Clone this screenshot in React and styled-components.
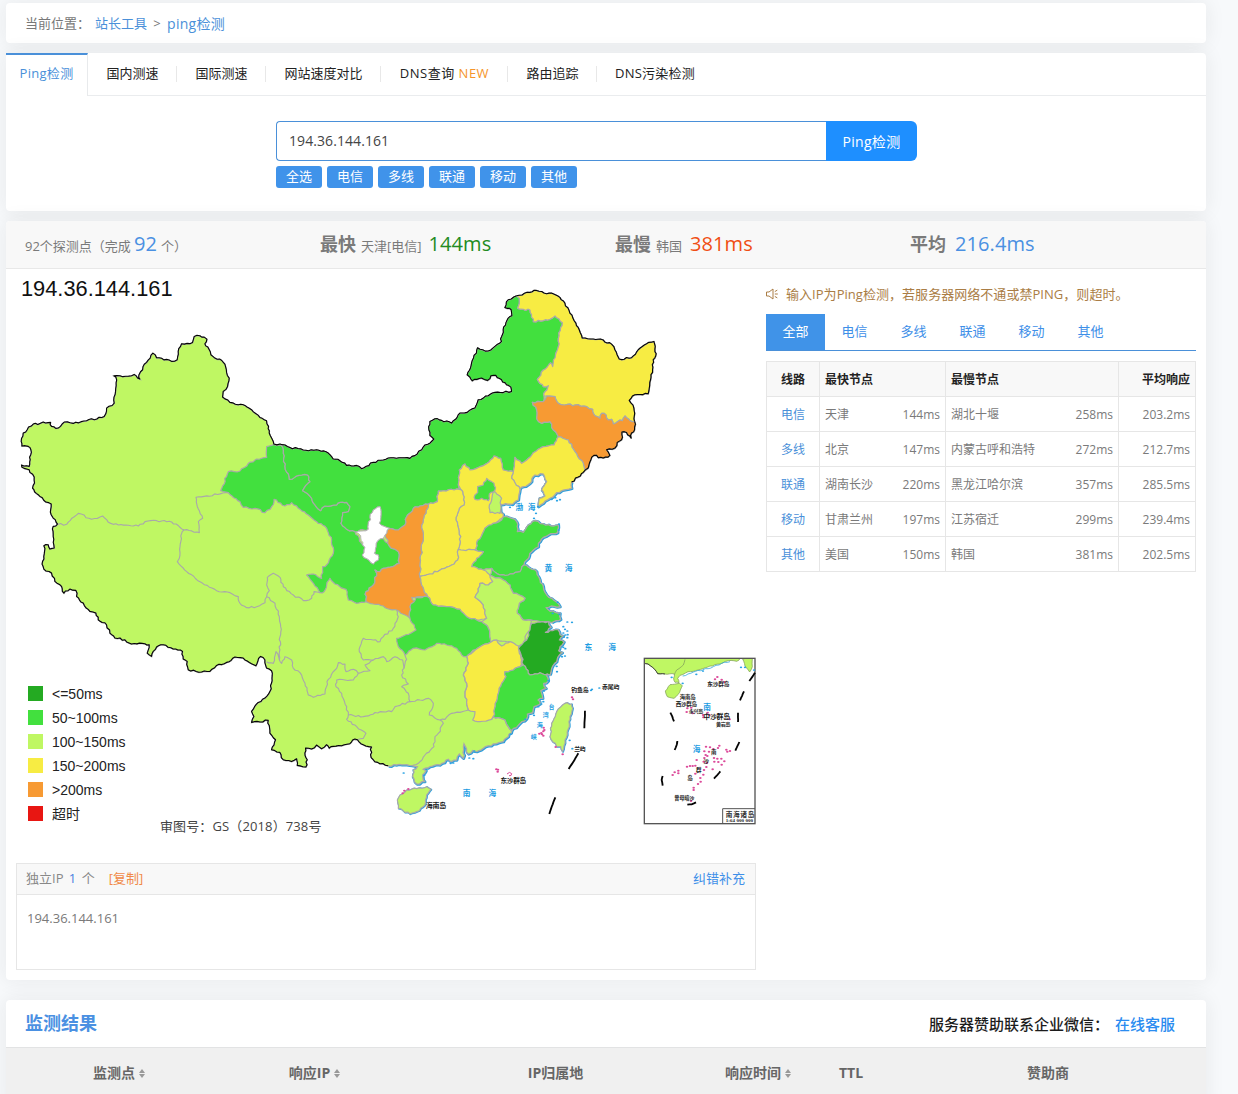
import React from 'react';
import styled, { createGlobalStyle } from 'styled-components';

const GlobalStyle = createGlobalStyle`
  * { box-sizing: border-box; }
  body {
    margin: 0;
    background: #f7f9fb;
    font-family: "Open Sans", "Noto Sans CJK SC", sans-serif;
    font-size: 13px;
    color: #7a7a7a;
  }
`;

/* ---------- map geometry ---------- */

// Survey sheets share one coordinate space; each has its own origin.
const SHEETS = { nw: [0, 0], ne: [960, 0], sw: [0, 870], se: [960, 870], in: [1860, 1110] };

const trace = (text) => {
  const out = [];
  let origin = SHEETS.nw;
  text.trim().split(/\s+/).forEach((token) => {
    if (SHEETS[token]) { origin = SHEETS[token]; return; }
    const [x, y] = token.split(',').map(Number);
    out.push([x + origin[0], y + origin[1]]);
  });
  return out;
};

const noise = (n) => {
  const s = Math.sin(n * 12.9898) * 43758.5453;
  return (s - Math.floor(s)) * 2 - 1;
};

// Splits an edge into short uneven steps; both neighbours get the same steps.
const edge = (a, b, amount) => {
  const flip = a[0] > b[0] || (a[0] === b[0] && a[1] > b[1]);
  const [p, q] = flip ? [b, a] : [a, b];
  const dx = q[0] - p[0];
  const dy = q[1] - p[1];
  const len = Math.hypot(dx, dy) || 1;
  const steps = Math.max(1, Math.round(len / 8));
  const pts = [];
  for (let i = 1; i < steps; i += 1) {
    const t = i / steps;
    const off = noise(p[0] + p[1] * 3 + i * 7) * amount;
    pts.push([p[0] + dx * t - (dy / len) * off, p[1] + dy * t + (dx / len) * off]);
  }
  return flip ? pts.reverse() : pts;
};

const toPath = (text, closed, amount = 2.8) => {
  const pts = trace(text);
  const all = [];
  pts.forEach((p, i) => {
    all.push(p);
    const next = pts[i + 1] || (closed ? pts[0] : null);
    if (next) all.push(...edge(p, next, amount));
  });
  return `M${all.map((p) => `${p[0].toFixed(1)} ${p[1].toFixed(1)}`).join('L')}${closed ? 'Z' : ''}`;
};

const NORTH_BORDER = `nw 143,763 130,745 124,735 124,703 108,697 90,680 74,666 68,655 74,640 73,622 60,608 58,600 36,592 35,586 50,588 58,590 61,570 63,540 55,530 36,529 34,515 40,490 52,480 56,472 70,463 90,461 100,457 122,458 125,470 145,475 163,457 190,461 230,453 283,440 290,415 313,400 317,365 318,322 312,318 330,318 365,318 373,314 383,325 390,328 387,316 392,306 410,278 429,250 440,264 470,269 485,275 502,270 505,245 515,222 548,218 553,200 570,198 583,202 591,208 585,222 597,238 603,255 615,265 630,268 645,283 650,308 658,325 653,350 640,365 638,382 660,398 685,405 705,407 725,420 750,443 770,453 776,470 778,490 792,523`;
const MONGOLIA_BORDER = `810,523 840,533 880,541 920,540 955,550 970,568 ne 30,573 50,587 80,587 95,597 130,578 175,565 240,566 262,553 280,532 312,508 300,497 297,480 300,455 315,447 335,452 365,460 378,448 390,430 412,428 435,415 445,390 475,378 495,368 545,365 543,352 530,345 515,330 498,317 483,318 473,332 455,325 427,333 420,322 412,315 425,280 443,234 475,244 495,230 515,215 512,208 520,180 535,145 546,138 544,120 525,113 535,90 560,78`;
const AMUR_BORDER = `ne 560,78 600,68 620,62 650,72 665,70 690,83 705,100 720,130 738,160 748,180 757,205 790,208 812,208 825,217 845,223 855,240 868,268 905,264 925,240 950,222 972,215 975,238 979,252 970,270 968,300 962,330 955,372 915,375 898,392 912,415 914,455`;
const JILIN_OUTER = `ne 914,455 914,480 905,490 904,505 890,488 876,487 875,510 862,518 855,535 830,540 840,557 820,565 792,557 783,570 775,595`;
const YALU = `ne 775,595 760,608 745,622 725,637`;
const LIAONING_COAST = `ne 725,637 725,655 700,660 680,668 660,685 640,700 625,710 628,685 645,678 635,660 650,635 640,612 615,615 600,640 580,650 570,658`;
const BOHAI_COAST = `ne 570,658 565,690 548,703 512,703 512,720 520,740`;
const SHANDONG_COAST = `ne 520,740 545,745 560,755 562,785 580,787 595,765 615,752 640,762 662,768 685,765 683,788 655,795 640,802 625,820 625,830 605,845 590,870 582,885`;
const JIANGSU_COAST = `ne 582,885 600,895 620,905 630,930 se 640,80 650,105 665,115 690,140 672,139 648,143 660,154 690,160 692,178 665,188`;
const ZHEJIANG_COAST = `se 655,185 663,202 646,217 668,212 684,209 690,225 700,228 688,240 702,246 690,260 686,272 697,278 683,292 680,305 668,318 660,345`;
const FUJIAN_COAST = `se 660,345 648,345 655,362 641,370 648,385 632,392 638,415 624,420 630,432 612,440 608,458 592,462 590,476 570,490 545,512`;
const SOUTH_COAST = `se 545,512 535,530 520,545 490,552 460,565 440,575 428,572 415,582 402,552 400,595 388,582 380,600 365,605 355,598 330,615 300,620 280,628 288,632 278,645 284,665 260,672 248,650 250,630 262,620 245,617 200,615 175,618`;
const SOUTH_BORDER = `se 175,618 150,612 130,600 122,585 125,562 100,555 75,538 60,552 35,558 10,560 sw 970,560 958,565 950,555 935,567 920,556 905,568 887,565 885,580 892,600 888,622 862,617 860,597 845,605 820,600 810,578 785,570 797,540 780,520 775,482 725,488 732,470 725,455 745,428 765,415 780,395 785,370 785,333 770,325 765,300 752,290 738,318 725,312 700,295 675,292 650,308 620,317 600,335 575,337 535,330 532,305 520,298 518,275 490,268 460,255 440,262 425,290 412,280 418,255 405,252 365,253 345,240 315,235 300,220 290,195 265,180 258,160 240,155 220,130 200,110 198,92 180,88 162,100 155,80 135,65 125,40 102,28 98,5 nw 104,845 102,828 115,825 120,838 133,835 130,800 130,770 143,763`;

const MAINLAND = [NORTH_BORDER, 'nw', MONGOLIA_BORDER, AMUR_BORDER, JILIN_OUTER, YALU, LIAONING_COAST, BOHAI_COAST, SHANDONG_COAST, JIANGSU_COAST, ZHEJIANG_COAST, FUJIAN_COAST, SOUTH_COAST, SOUTH_BORDER].join(' ');

const COLORS = {
  fast: '#24aa22', good: '#42e03e', fair: '#bff763', slow: '#f7ec43', poor: '#f79a33', timeout: '#e81612',
};

const GANSU_MONGOLIA = `815,527 820,550 825,590 838,628 875,615 893,615 900,635 878,662 905,685 920,712 932,722 945,708 ne 20,705 30,697 50,697 60,710 55,725 38,728 33,760 50,778 75,785`;
const MONGOLIA_GANSU = GANSU_MONGOLIA.replace('ne ', '').split(' ');
const mongoliaBack = `ne ${MONGOLIA_GANSU.slice(12).reverse().join(' ')} nw ${MONGOLIA_GANSU.slice(0, 12).reverse().join(' ')}`;

const TAIWAN = `se 705,430 725,432 728,445 720,470 718,500 705,540 698,575 692,560 680,560 668,545 660,530 665,490 680,455`;
const HAINAN = `se 230,690 260,686 290,680 303,688 290,705 285,735 260,755 240,762 205,745 202,720 210,705`;

const PROVINCES = [
  ['gansu', 'good', `nw 770,530 792,523 ${GANSU_MONGOLIA} 98,825 105,832 97,855 130,882 145,870 145,855 133,850 138,830 143,812 160,805 178,828 205,845 208,880 188,890 160,895 150,905 135,900 se 140,40 130,75 108,95 108,125 80,130 55,120 48,88 15,72 0,55 sw 950,75 942,95 930,98 915,78 890,45 910,42 935,55 938,20 nw 945,890 970,850 965,810 950,775 920,755 895,735 865,715 845,698 825,708 792,688 785,710 765,728 735,715 700,712 690,695 655,668 632,662 655,605 690,603 715,580 740,567 770,562`],
  ['neimenggu', 'good', `nw 815,527 ${MONGOLIA_BORDER} 568,85 563,115 580,118 600,120 610,155 640,152 660,148 675,138 697,158 685,205 685,230 670,280 640,300 622,328 640,350 655,347 645,365 642,378 640,395 607,397 620,420 620,445 635,460 660,455 670,480 685,500 672,525 640,530 610,548 590,570 575,580 555,562 550,605 520,600 512,565 492,558 478,575 450,590 420,600 405,582 388,600 385,645 388,658 325,663 322,695 295,703 270,708 250,715 230,740 225,765 205,780 178,775 148,760 153,725 150,710 130,720 120,742 115,778 ${mongoliaBack}`],
  ['heilongjiang', 'slow', `${AMUR_BORDER} 900,452 885,438 877,452 870,450 850,462 845,448 835,450 822,430 815,430 810,445 790,430 788,418 770,410 735,405 705,405 685,400 675,380 650,378 642,378 645,365 655,347 640,350 622,328 640,300 662,278 668,290 670,270 685,230 685,205 697,158 675,138 660,148 640,152 610,155 600,120 580,118 563,115 568,85`],
  ['jilin', 'poor', `${JILIN_OUTER} 765,600 760,580 735,545 715,510 685,500 670,480 660,455 635,460 620,445 620,420 607,397 640,395 650,378 675,380 685,400 705,405 735,405 770,410 788,418 790,430 810,445 815,430 822,430 835,450 845,448 850,462 870,450 877,452 885,438 900,452`],
  ['liaoning', 'slow', `${YALU} ${LIAONING_COAST} 545,625 550,605 555,562 575,580 590,570 610,548 640,530 672,525 685,500 715,510 735,545 760,580 765,600`],
  ['hebei', 'slow', `ne 385,645 388,600 405,582 420,600 450,590 478,575 492,558 512,565 520,600 550,605 545,625 ${BOHAI_COAST} 515,745 490,760 465,775 440,820 440,842 385,838 392,800 378,750 388,715 402,705 398,665`],
  ['tianjin', 'fair', `ne 490,665 500,672 515,685 512,705 510,730 480,728 478,705 485,690`],
  ['beijing', 'good', `ne 470,625 492,640 495,660 478,672 475,692 455,685 435,688 435,675 443,668 443,650 460,645`],
  ['shanxi', 'slow', `ne 325,663 388,658 398,665 402,705 388,715 378,750 392,800 385,838 383,870 365,885 300,912 270,920 270,880 280,800 275,765 293,715 295,703 322,695`],
  ['shaanxi', 'poor', `ne 295,703 293,715 275,765 280,800 270,880 270,920 se 275,75 293,110 245,112 258,130 240,140 240,175 200,150 180,148 160,138 108,125 108,95 130,75 140,40 ne 135,900 150,905 160,895 188,890 208,880 205,845 178,828 165,795 178,775 205,780 225,765 230,740 250,715 270,708`],
  ['shandong', 'good', `${SHANDONG_COAST} 570,905 535,915 510,915 485,895 460,900 425,890 440,865 460,845 440,842 440,820 465,775 490,760 515,750`],
  ['henan', 'slow', `ne 385,838 440,842 460,845 440,865 425,890 460,900 480,915 se 485,50 488,65 475,75 450,70 445,95 435,112 460,135 470,175 440,180 410,170 390,148 350,140 310,135 293,110 275,75 270,50 ne 300,912 365,885 383,870`],
  ['jiangsu', 'good', `${JIANGSU_COAST} 655,185 645,185 610,182 580,180 562,160 568,130 585,115 568,105 550,100 540,75 520,60 490,50 480,45 ne 485,895 510,915 535,915 570,905`],
  ['anhui', 'fair', `se 480,45 490,50 520,60 540,75 550,100 568,105 585,115 568,130 562,160 580,180 605,183 600,210 585,230 580,255 560,260 540,245 500,240 482,247 475,205 455,185 470,175 460,135 435,112 445,95 450,70 475,75 488,65`],
  ['hubei', 'good', `se 258,112 293,110 310,135 350,140 390,148 410,170 440,180 455,185 475,205 482,247 450,260 430,270 410,290 395,285 380,265 350,255 320,250 285,270 250,265 225,285 205,260 200,235 220,228 258,210 240,175 240,140`],
  ['jiangxi', 'slow', `se 410,290 450,260 482,247 500,240 515,258 540,245 565,258 568,280 575,300 570,320 550,330 525,335 528,350 515,370 505,400 490,470 485,478 450,485 428,480 435,455 415,450 405,395 410,370 400,345 415,310`],
  ['zhejiang', 'fast', `se 605,190 ${ZHEJIANG_COAST.slice(3)} 630,338 600,345 580,315 575,290 565,265 590,240 600,210`],
  ['fujian', 'good', `${FUJIAN_COAST} 535,500 525,480 490,470 505,400 515,370 528,350 525,335 550,330 570,320 580,315 600,345 630,338`],
  ['taiwan', 'fair', TAIWAN],
  ['hainan', 'fair', HAINAN],
];

const NINGXIA = `ne 150,710 153,725 148,760 178,775 165,795 160,805 143,812 138,830 133,850 145,855 145,870 130,882 97,855 105,832 98,825 92,797 78,787 115,778 120,742 130,720`;

const INNER_LINES = [
  `nw 143,763 170,763 205,730 245,748 278,738 295,757 325,765 385,768 405,755 440,752 485,756 522,780`,
  `nw 655,668 558,682 562,710 578,745 565,755 568,788 522,780 515,790 510,830 508,865 502,875 sw 530,35 570,65 620,92 660,98 685,110 690,130 710,143 740,140 765,128 770,110 778,92 770,75 772,52 790,40 810,52 820,80 850,105 880,122 905,115 912,95 930,98`,
  `sw 770,110 795,130 808,170 812,200 808,300 798,275 790,310 770,305`,
  `sw 808,300 815,310 825,290 845,300 850,325 870,338 885,370 895,405 910,412 945,402 955,358 975,330 se 20,325 25,308 45,312 48,335 70,328 85,340 70,360 20,360 18,380 35,400 50,440 55,465 50,478 80,500 108,520 100,535 75,540`,
  `se 55,465 100,470 150,455 185,455 195,440 240,425 235,400 215,380 235,372 215,345 225,310 230,298 225,285`,
  `se 85,340 120,332 105,315 130,300 160,290 170,305 195,290 218,300 222,325`,
  `se 130,300 100,300 88,275 90,260 100,235 130,240 150,245 160,230 190,205 195,190 205,170 200,150`,
  `se 410,290 415,310 400,345 410,370 405,395 415,450 365,460 345,478 330,480 298,465 310,430 295,415 270,420 240,425`,
  `se 330,480 340,490 325,520 315,530 312,560 285,585 265,610 245,617`,
  `se 485,478 490,470 525,480 535,500 545,512`,
];

const COASTS = [LIAONING_COAST, BOHAI_COAST, SHANDONG_COAST, JIANGSU_COAST, ZHEJIANG_COAST, FUJIAN_COAST, SOUTH_COAST];

const SEA_LABELS = [
  ['ne', 568, 713, '渤'], ['ne', 605, 711, '海'], ['ne', 655, 894, '黄'], ['ne', 716, 894, '海'],
  ['se', 775, 262, '东'], ['se', 846, 262, '海'], ['se', 410, 700, '南'], ['se', 487, 700, '海'],
  ['se', 665, 440, '台', 17], ['se', 647, 466, '湾', 18], ['se', 629, 495, '海', 18], ['se', 611, 530, '峡', 18],
  ['in', 231, 203, '南'], ['in', 200, 327, '海'],
];

const ISLAND_LABELS = [
  ['se', 750, 388, '钓鱼岛', 52], ['se', 842, 381, '赤尾屿', 52], ['se', 750, 567, '兰屿', 34],
  ['se', 550, 663, '东沙群岛', 77], ['se', 318, 738, '海南岛', 61],
  ['in', 265, 132, '东沙群岛', 66], ['in', 173, 170, '海南岛', 47], ['in', 169, 192, '西沙群岛', 64],
  ['in', 198, 212, '永兴岛', 44], ['in', 260, 230, '中沙群岛', 80], ['in', 280, 250, '黄岩岛', 44],
  ['in', 251, 335, '南', 16], ['in', 229, 361, '沙', 16], ['in', 206, 388, '群', 16], ['in', 180, 414, '岛', 16],
  ['in', 163, 473, '曾母暗沙', 60],
];

const DASHES = [
  `se 765,452 764,480 763,505`, `se 745,580 733,601 716,627`, `se 676,712 668,733 658,762`,
  `in 375,98 358,123`, `in 342,154 330,181`, `in 324,218 324,246`, `in 328,306 316,332`,
  `in 271,394 252,416`, `in 198,487 185,493 172,494`, `in 98,408 95,420 98,437`,
  `in 142,303 140,315 134,330`, `in 121,218 127,230 132,244`,
];

const REEFS = [
  ['se', 726, 412], ['se', 729, 418], ['se', 641, 503], ['se', 643, 510], ['se', 640, 514], ['se', 628, 521], ['se', 634, 519], ['se', 640, 527], ['se', 636, 523], ['se', 677, 561], ['se', 698, 583],
  ['se', 499, 628], ['se', 504, 629], ['se', 503, 635], ['se', 218, 700], ['se', 223, 692], ['se', 235, 687],
  ['in', 255, 118], ['in', 262, 111], ['in', 275, 119], ['in', 283, 126], ['in', 172, 205], ['in', 170, 216], ['in', 184, 203], ['in', 188, 220],
  ['in', 220, 232], ['in', 219, 225], ['in', 233, 218], ['in', 238, 225], ['in', 299, 238],
  ['in', 268, 317], ['in', 264, 324], ['in', 228, 320], ['in', 240, 322], ['in', 223, 334], ['in', 237, 335], ['in', 250, 327], ['in', 289, 329], ['in', 292, 335], ['in', 300, 333],
  ['in', 227, 345], ['in', 223, 354], ['in', 232, 348], ['in', 221, 365], ['in', 231, 369], ['in', 252, 354], ['in', 253, 365], ['in', 262, 356], ['in', 265, 366], ['in', 274, 356], ['in', 283, 364], ['in', 275, 374],
  ['in', 200, 360], ['in', 171, 380], ['in', 180, 378], ['in', 188, 378], ['in', 196, 377], ['in', 229, 381], ['in', 222, 390], ['in', 248, 388], ['in', 196, 401], ['in', 220, 404], ['in', 211, 414], ['in', 212, 425], ['in', 204, 432], ['in', 191, 443], ['in', 191, 450],
  ['in', 134, 397], ['in', 145, 392], ['in', 145, 400], ['in', 128, 405], ['in', 183, 483],
];

const ISLETS = [
  ['ne', 665, 688], ['ne', 676, 683], ['ne', 681, 692], ['ne', 690, 689], ['ne', 618, 730], ['ne', 624, 710], ['ne', 540, 712], ['ne', 612, 745],
  ['ne', 687, 762], ['ne', 686, 780], ['ne', 548, 706], ['se', 683, 127], ['se', 668, 160], ['se', 688, 163], ['se', 712, 186], ['se', 726, 187],
  ['se', 700, 200], ['se', 705, 208], ['se', 712, 213], ['se', 700, 219], ['se', 706, 225], ['se', 713, 224], ['se', 702, 231], ['se', 712, 233], ['se', 700, 262], ['se', 706, 266],
  ['se', 705, 288], ['se', 696, 290], ['se', 680, 319], ['se', 681, 335], ['se', 655, 362], ['se', 642, 393], ['se', 625, 440], ['se', 586, 478],
  ['se', 542, 522], ['se', 370, 609], ['se', 362, 610], ['se', 418, 594], ['se', 430, 596], ['se', 433, 573], ['se', 221, 639], ['se', 283, 646],
  ['se', 783, 391], ['se', 786, 388], ['se', 808, 384], ['se', 719, 541], ['se', 727, 566], ['se', 612, 466], ['se', 640, 425], ['se', 634, 432],
  ['in', 345, 82], ['in', 372, 90], ['in', 333, 82], ['in', 199, 103], ['in', 219, 93], ['in', 125, 112], ['in', 158, 130],
];

const at = (sheet, x, y) => ({ x: x + SHEETS[sheet][0], y: y + SHEETS[sheet][1] });

function ChinaMap() {
  return (
    <MapSvg viewBox="18 0 2220 1740" aria-label="ping map">
      <g fill="none" stroke="#2b9fdd" strokeWidth="8" strokeLinejoin="round" transform="translate(1.4 1)">
        {COASTS.map((line) => <path key={line} d={toPath(line)} />)}
        <path d={toPath(TAIWAN, true)} strokeWidth="5" />
        <path d={toPath(HAINAN, true)} strokeWidth="5" />
      </g>
      <path d={toPath(MAINLAND, true)} fill={COLORS.fair} stroke="#a9a9a9" strokeWidth="4" />
      {PROVINCES.map(([id, level, shape]) => (
        <path key={id} d={toPath(shape, true)} fill={COLORS[level]} stroke="#a9a9a9" strokeWidth="3.6" strokeLinejoin="round" />
      ))}
      <path d={toPath(NINGXIA, true)} fill="#fff" stroke="#b5b5b5" strokeWidth="3" />
      <g fill="none" strokeLinejoin="round">
        {INNER_LINES.map((line) => <path key={line} d={toPath(line)} stroke="#a9a9a9" strokeWidth="3.4" />)}
        <g transform="translate(-.4 -.8)">
          {[`${NORTH_BORDER} ${MONGOLIA_BORDER}`, AMUR_BORDER, JILIN_OUTER, YALU, SOUTH_BORDER].map((line) => (
            <path key={line} d={toPath(line)} stroke="#050505" strokeWidth="3.3" />
          ))}
        </g>
      </g>
      <g>
        <clipPath id="inset"><rect x="1903" y="1165" width="332" height="496" /></clipPath>
        <g clipPath="url(#inset)" fill={COLORS.fair} stroke="#87a45d" strokeWidth="2.4">
          <path d={toPath('in 40,50 338,50 320,64 295,62 270,72 240,78 218,86 190,94 174,95 150,106 143,115 147,128 135,127 131,114 133,102 105,102 83,101 74,88 54,72 40,71', true, 1.5)} />
          <path d={toPath('in 338,57 367,55 367,80 359,96 345,78', true, 1)} />
          <path d={toPath('in 120,134 148,130 157,137 149,157 132,175 112,170 106,153', true, 1)} />
          <path d={toPath('in 165,58 160,75 140,90 133,104', false, 1)} fill="none" />
          <path d={toPath('in 158,108 190,96 218,90 250,80 275,70 300,65', false, 2)} fill="none" stroke="#36aadd" />
          <path d={toPath('in 40,71 54,72 74,88 83,101 105,102', false, 1)} fill="none" stroke="#222" />
        </g>
        <rect x="1903" y="1165" width="332" height="496" fill="none" stroke="#555" strokeWidth="4" />
        <path d="M2138 1661V1616H2235" fill="none" stroke="#555" strokeWidth="3" />
        <MapText x="2190" y="1641" fontSize="20" textLength="86" fill="#333">南海诸岛</MapText>
        <MapText x="2188" y="1657" fontSize="15" textLength="82" fill="#222">1:64 000 000</MapText>
      </g>
      {DASHES.map((line) => <path key={line} d={toPath(line, false, 0.5)} fill="none" stroke="#050505" strokeWidth="5.5" />)}
      {REEFS.map(([s, x, y]) => {
        const p = at(s, x, y);
        return <ellipse key={`${s}${x}-${y}`} cx={p.x} cy={p.y} rx="3.8" ry="3" fill="#dc4a9a" />;
      })}
      <path d="M1491 1512q8-9 14-1q0 8-8 6" fill="none" stroke="#dc4a9a" strokeWidth="3" />
      {ISLETS.map(([s, x, y]) => {
        const p = at(s, x, y);
        return <ellipse key={`${s}${x}-${y}`} cx={p.x} cy={p.y} rx="3.6" ry="2.6" fill="#2aa3e4" />;
      })}
      {SEA_LABELS.map(([s, x, y, label, size = 23]) => {
        const p = at(s, x, y);
        return <MapText key={`${s}${x}`} x={p.x} y={p.y + size * 0.36} fontSize={size} fill="#1b9ce2">{label}</MapText>;
      })}
      {ISLAND_LABELS.map(([s, x, y, label, width]) => {
        const p = at(s, x, y);
        return <MapText key={`${s}${x}-${y}`} x={p.x} y={p.y + 7} fontSize={width / label.length + 0.5} textLength={width} fill="#1a1a1a">{label}</MapText>;
      })}
    </MapSvg>
  );
}

/* ---------- styled parts ---------- */

const Page = styled.div`
  height: 1094px;
  overflow: hidden;
  padding: 3px 32px 0 6px;
  display: flex;
  flex-direction: column;
`;

const Panel = styled.section`
  flex: none;
  height: ${(p) => p.$h}px;
  margin-bottom: ${(p) => p.$gap || 10}px;
  background: #fff;
  border-radius: 4px;
  box-shadow: 0 0 20px rgba(40, 40, 40, 0.08);
`;

const Crumbs = styled.nav`
  height: 39px;
  display: flex;
  align-items: center;
  padding-left: 19px;
  color: #777;
  white-space: pre;
  a { color: #4a90d9; }
`;
const Here = styled.span` width: 70px; `;
const Arrow = styled.span` width: 20px; text-align: center; font-size: 13px; `;
const Current = styled.a` font-size: 14px; letter-spacing: 0.3px; `;

const Nav = styled.nav`
  display: flex;
  height: 43px;
  color: #222;
`;
const NavActive = styled.a`
  width: 82px;
  border-top: 2px solid #4a90d9;
  border-right: 1px solid #e8eaec;
  color: #4a90d9;
  text-align: center;
  line-height: 37px;
  letter-spacing: 0.3px;
`;
const NavItem = styled.a`
  width: ${(p) => p.$w}px;
  flex: ${(p) => (p.$w ? 'none' : 1)};
  padding-left: ${(p) => (p.$w ? 0 : 18)}px;
  text-align: ${(p) => (p.$w ? 'center' : 'left')};
  line-height: 41px;
  letter-spacing: ${(p) => p.$ls || 0}px;
  border-bottom: 1px solid #eaecee;
  background: ${(p) => (p.$w ? 'linear-gradient(#e8e8e8, #e8e8e8) right 0 top 13px / 1px 16px no-repeat' : 'none')};
  em { font-style: normal; color: #f5952b; }
`;

const Search = styled.form`
  margin: 25px 0 0 270px;
  width: 641px;
  display: flex;
`;
const Input = styled.div`
  flex: 1;
  height: 40px;
  padding-left: 12px;
  border: 1px solid #4a90d9;
  border-right: 0;
  border-radius: 4px 0 0 4px;
  font-size: 14px;
  line-height: 38px;
  letter-spacing: 0.08px;
  color: #444;
`;
const Button = styled.div`
  width: 91px;
  height: 40px;
  border-radius: 0 6px 6px 0;
  background: #1e8fff;
  color: #fff;
  text-align: center;
  font-size: 14px;
  line-height: 41px;
  letter-spacing: 0.3px;
`;
const Tags = styled.div`
  display: flex;
  gap: 5px;
  margin: 5px 0 0 270px;
`;
const Tag = styled.span`
  width: 46px;
  height: 22px;
  border-radius: 3px;
  background: #4093ea;
  color: #fff;
  text-align: center;
  line-height: 21px;
`;

const Stats = styled.div`
  display: grid;
  grid-template-columns: repeat(4, 295px);
  height: 48px;
  padding-left: 19px;
  background: #f8f8f8;
  border-bottom: 1px solid #e8e8e8;
  border-radius: 4px 4px 0 0;
  line-height: 46px;
  white-space: pre;
`;
const Stat = styled.div`
  b { font-size: 18px; margin-right: 5px; }
`;
const Big = styled.span`
  font-size: 20px;
  letter-spacing: 0.1px;
  color: ${(p) => p.$c};
  margin: 0 ${(p) => p.$r || 0}px 0 ${(p) => p.$l || 0}px;
`;

const Body = styled.div`
  display: flex;
  gap: 10px;
  padding: 0 10px;
`;
const Left = styled.div` width: 740px; `;
const Right = styled.div` width: 430px; padding-top: 14px; `;

const MapBox = styled.div`
  position: relative;
  height: 594px;
  padding-top: 1px;
`;
const MapSvg = styled.svg`
  display: block;
  width: 740px;
  height: 580px;
`;
const MapText = styled.text`
  font-family: "Liberation Serif", "Noto Sans CJK SC", sans-serif;
  font-weight: 700;
  text-anchor: middle;
`;
const MapTitle = styled.div`
  position: absolute;
  left: 5px;
  top: 7px;
  font: 21.8px/26px "Liberation Sans", sans-serif;
  color: #111;
`;
const Legend = styled.div`
  position: absolute;
  left: 12px;
  top: 412px;
  font-family: "Liberation Sans", "Noto Sans CJK SC", sans-serif;
  font-size: 14px;
  color: #222;
`;
const LegendRow = styled.div`
  display: flex;
  align-items: center;
  gap: 9px;
  height: 24px;
  line-height: 22px;
  &::before {
    content: '';
    width: 15px;
    height: 15px;
    background: ${(p) => p.$c};
  }
  span { padding-top: 1px; }
`;
const License = styled.div`
  position: absolute;
  left: 144px;
  top: 547px;
  font-size: 13px;
  line-height: 20px;
  letter-spacing: 0.12px;
  color: #444;
`;

const IpBox = styled.div`
  height: 107px;
  border: 1px solid #e6e6e6;
`;
const IpHead = styled.div`
  display: flex;
  height: 31px;
  padding: 0 10px 0 9px;
  background: #f8f8f8;
  border-bottom: 1px solid #e6e6e6;
  line-height: 29px;
  color: #888;
  white-space: pre;
  i { font-style: normal; color: #4a7fe0; margin: 0 2px; }
`;
const Copy = styled.a` margin-left: 14px; color: #f08a48; `;
const Fix = styled.a` margin-left: auto; color: #3e8fe8; `;
const IpText = styled.div` padding: 14px 10px; line-height: 18px; `;

const Notice = styled.div`
  display: flex;
  align-items: center;
  gap: 8px;
  height: 21px;
  color: #aa7d45;
  white-space: nowrap;
  letter-spacing: 0.04px;
  svg { width: 12px; height: 12px; flex: none; }
`;
const Lines = styled.div`
  display: flex;
  margin-top: 10px;
  height: 37px;
  border-bottom: 1px solid #4a90d9;
`;
const Line = styled.a`
  width: 59px;
  text-align: center;
  line-height: 35px;
  color: ${(p) => (p.$on ? '#fff' : '#3e8fe8')};
  background: ${(p) => (p.$on ? '#4093e8' : 'transparent')};
`;
const Table = styled.table`
  width: 429px;
  margin-top: 10px;
  border-collapse: collapse;
  table-layout: fixed;
  font-size: 12px;
  th, td {
    height: 35px;
    padding: 2px 5px 0;
    border: 1px solid #e6e6e6;
    text-align: left;
    line-height: 20px;
  }
  th { background: #f8f8f8; color: #222; }
  th:first-child, td:first-child { text-align: center; }
  td:first-child { color: #4a90d9; }
  th:last-child, td:last-child { text-align: right; }
`;
const Node = styled.div`
  display: flex;
  justify-content: space-between;
`;

const ResultHead = styled.div`
  display: flex;
  align-items: center;
  justify-content: space-between;
  height: 48px;
  padding: 0 31px 1px 19px;
  border-bottom: 1px solid #e2e3e4;
`;
const Title = styled.h2`
  margin: 0;
  font-size: 18px;
  line-height: 24px;
  color: #4a90e2;
`;
const Sponsor = styled.div`
  display: flex;
  font-size: 15px;
  font-weight: 500;
  color: #1c1c1c;
  span { width: 186px; white-space: nowrap; }
  a { color: #2a8cf0; }
`;
const Columns = styled.div`
  display: grid;
  grid-template-columns: 226px 165px 317px 88px 98px 296px;
  height: 60px;
  background: #f0f0f0;
  font-size: 14px;
  font-weight: 700;
  color: #666;
`;
const Column = styled.div`
  display: flex;
  justify-content: center;
  gap: 4px;
  line-height: 49px;
  white-space: nowrap;
  svg { width: 6px; height: 9px; margin-top: 21px; flex: none; }
`;

/* ---------- data ---------- */

const NAV = [['国内测速', 89], ['国际测速', 89], ['网站速度对比', 115], ['DNS查询', 127, 'NEW', 0.5], ['路由追踪', 89], ['DNS污染检测', 0, '', 0.25]];
const GROUPS = ['电信', '多线', '联通', '移动', '其他'];
const LEGEND = [['fast', '<=50ms'], ['good', '50~100ms'], ['fair', '100~150ms'], ['slow', '150~200ms'], ['poor', '>200ms'], ['timeout', '超时']];
const ROWS = [
  ['电信', '天津', '144ms', '湖北十堰', '258ms', '203.2ms'],
  ['多线', '北京', '147ms', '内蒙古呼和浩特', '272ms', '212.7ms'],
  ['联通', '湖南长沙', '220ms', '黑龙江哈尔滨', '357ms', '285.5ms'],
  ['移动', '甘肃兰州', '197ms', '江苏宿迁', '299ms', '239.4ms'],
  ['其他', '美国', '150ms', '韩国', '381ms', '202.5ms'],
];
const COLUMNS = [['监测点', true], ['响应IP', true], ['IP归属地'], ['响应时间', true], ['TTL'], ['赞助商']];

const SortIcon = () => (
  <svg viewBox="0 0 6 9"><path d="M3 0L6 4H0ZM3 9L0 5H6Z" fill="#999" /></svg>
);

const SpeakerIcon = () => (
  <svg viewBox="0 0 12 12" fill="none" stroke="#aa7d45" strokeWidth="1">
    <path d="M.5 4H3L7 1V11L3 8H.5ZM8.8 3.6L11.3 2.1M8.8 6H11.8M8.8 8.4L11.3 9.9" />
  </svg>
);

export default function App() {
  return (
    <Page>
      <GlobalStyle />
      <Panel $h={40}>
        <Crumbs><Here>当前位置：</Here><a>站长工具</a><Arrow>&gt;</Arrow><Current>ping检测</Current></Crumbs>
      </Panel>
      <Panel $h={158}>
        <Nav>
          <NavActive>Ping检测</NavActive>
          {NAV.map(([label, w, badge, ls]) => (
            <NavItem key={label} $w={w} $ls={ls}>{label}{badge && <em> {badge}</em>}</NavItem>
          ))}
        </Nav>
        <Search><Input>194.36.144.161</Input><Button>Ping检测</Button></Search>
        <Tags>{['全选', ...GROUPS].map((t) => <Tag key={t}>{t}</Tag>)}</Tags>
      </Panel>
      <Panel $h={759} $gap={20}>
        <Stats>
          <Stat>92个探测点（完成<Big $c="#4a90e2" $l={3} $r={4}>92</Big>个）</Stat>
          <Stat><b>最快</b>天津[电信]<Big $c="#228b22" $l={7}>144ms</Big></Stat>
          <Stat><b>最慢</b>韩国<Big $c="#f04e14" $l={8}>381ms</Big></Stat>
          <Stat><b>平均</b><Big $c="#4a90e2" $l={4}>216.4ms</Big></Stat>
        </Stats>
        <Body>
          <Left>
            <MapBox>
              <ChinaMap />
              <MapTitle>194.36.144.161</MapTitle>
              <Legend>
                {LEGEND.map(([level, label]) => <LegendRow key={level} $c={COLORS[level]}><span>{label}</span></LegendRow>)}
              </Legend>
              <License>审图号：GS（2018）738号</License>
            </MapBox>
            <IpBox>
              <IpHead><span>独立IP <i>1</i> 个</span><Copy>[复制]</Copy><Fix>纠错补充</Fix></IpHead>
              <IpText>194.36.144.161</IpText>
            </IpBox>
          </Left>
          <Right>
            <Notice><SpeakerIcon />输入IP为Ping检测，若服务器网络不通或禁PING，则超时。</Notice>
            <Lines>
              <Line $on>全部</Line>
              {GROUPS.map((g) => <Line key={g}>{g}</Line>)}
            </Lines>
            <Table>
              <colgroup><col width="53" /><col width="126" /><col width="173" /><col width="77" /></colgroup>
              <thead><tr><th>线路</th><th>最快节点</th><th>最慢节点</th><th>平均响应</th></tr></thead>
              <tbody>
                {ROWS.map((r) => (
                  <tr key={r[0]}>
                    <td>{r[0]}</td>
                    <td><Node><span>{r[1]}</span><span>{r[2]}</span></Node></td>
                    <td><Node><span>{r[3]}</span><span>{r[4]}</span></Node></td>
                    <td>{r[5]}</td>
                  </tr>
                ))}
              </tbody>
            </Table>
          </Right>
        </Body>
      </Panel>
      <Panel $h={110}>
        <ResultHead>
          <Title>监测结果</Title>
          <Sponsor><span>服务器赞助联系企业微信：</span><a>在线客服</a></Sponsor>
        </ResultHead>
        <Columns>
          {COLUMNS.map(([label, sortable]) => <Column key={label}>{label}{sortable && <SortIcon />}</Column>)}
        </Columns>
      </Panel>
    </Page>
  );
}
